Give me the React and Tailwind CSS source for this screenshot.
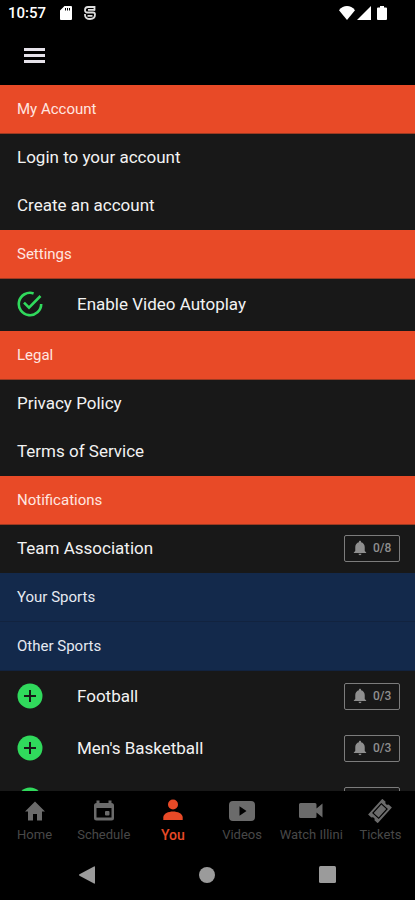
import React, { useState } from "react";
import { IoMdNotifications } from "react-icons/io";

const sports = [
  { id: 1, name: "Football", count: "0/3" },
  { id: 2, name: "Men's Basketball", count: "0/3" },
  { id: 3, name: "", count: "" },
];

function HomeIcon() {
  return (
    <svg viewBox="0 0 24 24" fill="currentColor" className="h-6 w-6">
      <path d="M10 21.500v-6.500h4v6.500h5v-9h3L12 2.500 2 12.500h3v9z" />
    </svg>
  );
}

function ScheduleIcon() {
  return (
    <svg viewBox="0 0 24 24" fill="currentColor" className="h-6 w-6">
      <path
        fillRule="evenodd"
        d="M4.500 1.500h3V4h9V1.500h3V4a2.500 2.500 0 0 1 2.500 2.500v12.500a2.500 2.500 0 0 1-2.500 2.500h-15A2.500 2.500 0 0 1 2 19V6.500A2.500 2.500 0 0 1 4.500 4zM4.500 9v9.500h15V9z"
      />
      <rect x="13" y="12" width="4.500" height="4.500" rx="1" />
    </svg>
  );
}

function PersonIcon() {
  return (
    <svg viewBox="0 0 24 24" fill="currentColor" className="h-6 w-6">
      <circle cx="12" cy="5.500" r="5" />
      <path d="M12 12.500c-4.500 0-9.700 2-9.700 6V21h19.400v-2.500c0-4-5.200-6-9.700-6z" />
    </svg>
  );
}

function VideosIcon() {
  return (
    <svg viewBox="0 0 28 24" fill="currentColor" className="h-6 w-7">
      <path
        fillRule="evenodd"
        d="M5 2h18a4 4 0 0 1 4 4v12a4 4 0 0 1-4 4H5a4 4 0 0 1-4-4V6a4 4 0 0 1 4-4zm6.500 5.300v9.400l7-4.700z"
      />
    </svg>
  );
}

function WatchIcon() {
  return (
    <svg viewBox="0 0 24 24" fill="currentColor" className="h-6 w-6">
      <path d="M1.500 4h14.500a1.500 1.500 0 0 1 1.500 1.500v4l6-5v14l-6-5v4a1.500 1.500 0 0 1-1.500 1.500H1.500A1.500 1.500 0 0 1 0 17.500v-12A1.500 1.500 0 0 1 1.500 4z" />
    </svg>
  );
}

function TicketIcon() {
  return (
    <svg viewBox="0 0 26 26" className="h-6 w-6">
      <g transform="rotate(-48 13 13)">
        <path
          fill="currentColor"
          d="M1.500 6h23v4.800a2.300 2.300 0 0 0 0 4.400V20h-23v-4.800a2.300 2.300 0 0 0 0-4.400z"
        />
        <rect
          x="6.200"
          y="8.800"
          width="13.600"
          height="8.400"
          fill="none"
          stroke="#000"
          strokeWidth="1.300"
        />
      </g>
    </svg>
  );
}

const tabs = [
  { label: "Home", Icon: HomeIcon },
  { label: "Schedule", Icon: ScheduleIcon },
  { label: "You", Icon: PersonIcon, active: true },
  { label: "Videos", Icon: VideosIcon },
  { label: "Watch Illini", Icon: WatchIcon },
  { label: "Tickets", Icon: TicketIcon },
];

function StatusBar() {
  return (
    <div className="flex h-[26px] shrink-0 items-center justify-between pl-2 pr-7 text-white">
      <div className="flex items-center">
        <span className="text-[15px] leading-6 font-medium">10:57</span>
        <svg viewBox="0 0 12 14" className="ml-3.5 h-3.5 w-3">
          <path
            fill="#fff"
            fillRule="evenodd"
            d="M4.500 0H11a1 1 0 0 1 1 1v12a1 1 0 0 1-1 1H1a1 1 0 0 1-1-1V4.500zM5 2v2.500h1V2zm2 0v2.500h1V2zm2 0v2.500h1V2z"
          />
        </svg>
        <svg
          viewBox="0 0 12 14"
          className="ml-3 h-3.5 w-3"
          fill="none"
          stroke="#ddd"
          strokeWidth="1.800"
        >
          <path d="M10.500 4.500V1H4a3 3 0 0 0-3 3v.5A2 2 0 0 0 3 6.500h6a2 2 0 0 1 2 2C11 11.700 9 13 6 13s-5-1.300-5-4V8" />
          <path d="M4 3.800h7M3.500 9.800h5" />
        </svg>
      </div>
      <div className="flex items-center">
        <svg viewBox="0 0 16 14" fill="currentColor" className="h-3.5 w-4">
          <path d="M8 14 0 4.200C2.300 1.400 5 0 8 0s5.700 1.400 8 4.200z" />
        </svg>
        <svg viewBox="0 0 14 14" fill="currentColor" className="ml-0.5 h-3.5 w-3.5">
          <path d="M14 0v14H0z" />
        </svg>
        <svg viewBox="0 0 10 14" fill="currentColor" className="ml-1.5 h-3.5 w-2.5">
          <path d="M3 0h4v1.500h2a1 1 0 0 1 1 1V13a1 1 0 0 1-1 1H1a1 1 0 0 1-1-1V2.500a1 1 0 0 1 1-1h2z" />
        </svg>
      </div>
    </div>
  );
}

function SectionTitle({ children }) {
  return (
    <h2 className="flex h-[49px] items-center border-b border-[#9c3a22] bg-[#e84a27] px-[17px] text-[15px] leading-5 text-[#ffe6e0]">
      {children}
    </h2>
  );
}

function SportsTitle({ children }) {
  return (
    <h2 className="flex h-[49px] items-center border-b border-[#12233f] bg-[#13294b] px-[17px] text-[15px] leading-5 text-[#e6eaf2]">
      {children}
    </h2>
  );
}

function LinkRow({ children }) {
  return (
    <a href="#" className="flex h-12 items-center px-[17px] pb-0.5">
      {children}
    </a>
  );
}

function CheckCircle({ checked }) {
  return (
    <svg
      viewBox="0 0 26 26"
      fill="none"
      stroke="currentColor"
      strokeWidth="2.600"
      className={
        checked
          ? "h-[26px] w-[26px] text-[#30d95c]"
          : "h-[26px] w-[26px] text-[#6b6b6b]"
      }
    >
      <path d="M16.600 2.400A11.200 11.200 0 1 0 24.200 13" />
      {checked && <path d="M7 11.600l5 5L23.500 5" />}
    </svg>
  );
}

function BellButton({ count }) {
  return (
    <button
      type="button"
      aria-label={`Alerts ${count}`}
      className="flex h-[27px] w-14 items-center gap-1 rounded-xs border border-[#7c7c7c] px-1.5 text-[#8f8f8f]"
    >
      <IoMdNotifications className="h-[18px] w-[18px] shrink-0" />
      <span className="text-xs leading-4 font-medium">{count}</span>
    </button>
  );
}

function SportRow({ name, count }) {
  return (
    <li className="flex h-[52px] items-center pr-[15px] pb-0.5 pl-[17px]">
      <button type="button" aria-label={`Add ${name}`} className="mr-[34px]">
        <svg viewBox="0 0 26 26" className="h-[26px] w-[26px]">
          <circle cx="13" cy="13" r="12.500" fill="#30d95c" />
          <path d="M13 7v12M7 13h12" stroke="#181818" strokeWidth="2" />
        </svg>
      </button>
      <span className="flex-1">{name}</span>
      <BellButton count={count} />
    </li>
  );
}

function App() {
  const [autoplay, setAutoplay] = useState(true);

  return (
    <div className="flex h-screen flex-col bg-black font-['Roboto',sans-serif]">
      <StatusBar />

      <header className="flex h-[59px] shrink-0 items-center px-6">
        <button type="button" aria-label="Menu" className="text-[#e6e2ea]">
          <svg viewBox="0 0 21 15" fill="currentColor" className="h-[15px] w-[21px]">
            <path d="M0 0h21v3H0zM0 6h21v3H0zM0 12h21v3H0z" />
          </svg>
        </button>
      </header>

      <main className="min-h-0 flex-1 overflow-y-auto bg-[#181818] text-[17px] leading-6 text-[#f2f2f2] [scrollbar-width:none]">
        <SectionTitle>My Account</SectionTitle>
        <LinkRow>Login to your account</LinkRow>
        <LinkRow>Create an account</LinkRow>

        <SectionTitle>Settings</SectionTitle>
        <label className="flex h-[52px] items-center gap-[34px] px-[17px] pb-0.5">
          <input
            type="checkbox"
            checked={autoplay}
            onChange={(e) => setAutoplay(e.target.checked)}
            className="sr-only"
          />
          <CheckCircle checked={autoplay} />
          Enable Video Autoplay
        </label>

        <SectionTitle>Legal</SectionTitle>
        <LinkRow>Privacy Policy</LinkRow>
        <LinkRow>Terms of Service</LinkRow>

        <SectionTitle>Notifications</SectionTitle>
        <div className="flex h-12 items-center justify-between pr-[15px] pb-0.5 pl-[17px]">
          <span>Team Association</span>
          <BellButton count="0/8" />
        </div>

        <SportsTitle>Your Sports</SportsTitle>
        <SportsTitle>Other Sports</SportsTitle>
        <ul>
          {sports.map((sport) => (
            <SportRow key={sport.id} name={sport.name} count={sport.count} />
          ))}
        </ul>
      </main>

      <nav className="grid h-[58px] shrink-0 grid-cols-6 pt-2">
        {tabs.map(({ label, Icon, active }) => (
          <a
            key={label}
            href="#"
            className={
              active
                ? "flex flex-col items-center gap-0.5 text-sm leading-5 font-medium text-[#e84a27]"
                : "flex flex-col items-center gap-0.5 text-[13px] leading-5 whitespace-nowrap text-[#6b6b6b]"
            }
          >
            <Icon />
            <span className={active ? "" : "text-[#484848]"}>{label}</span>
          </a>
        ))}
      </nav>

      <div className="flex h-[51px] shrink-0 items-center justify-between px-[79px] text-[#9b9b9b]">
        <button type="button" aria-label="Back">
          <svg viewBox="0 0 16 18" fill="currentColor" className="h-[18px] w-4">
            <path d="M15 0.500q1-.5 1 .7v15.600q0 1.200-1 .7L.5 9.700q-1-.7 0-1.400z" />
          </svg>
        </button>
        <button type="button" aria-label="Home screen">
          <svg viewBox="0 0 16 16" fill="currentColor" className="h-4 w-4">
            <circle cx="8" cy="8" r="8" />
          </svg>
        </button>
        <button type="button" aria-label="Recent apps">
          <svg viewBox="0 0 17 17" fill="currentColor" className="h-[17px] w-[17px]">
            <rect width="17" height="17" rx="1.500" />
          </svg>
        </button>
      </div>
    </div>
  );
}

export default App;
